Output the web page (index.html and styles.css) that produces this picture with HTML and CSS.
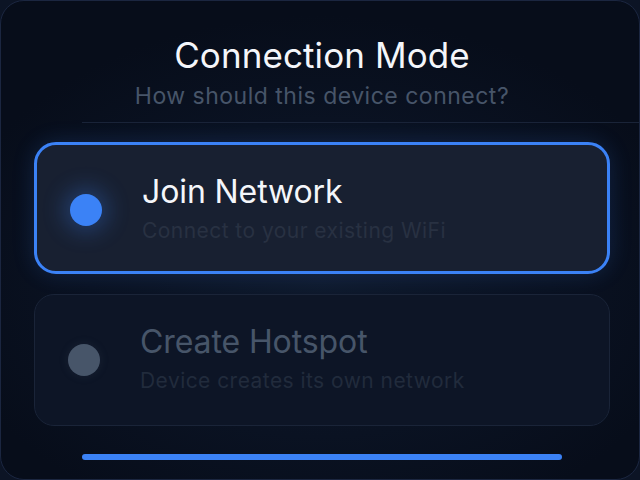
FILE: index.html
```html
<!DOCTYPE html>
<html lang="en">
<head>
    <meta charset="UTF-8">
    <meta name="viewport" content="width=device-width, initial-scale=1.0">
    <title>Connection Mode</title>
    <link rel="stylesheet" href="styles.css">
</head>
<body>

    <div class="panel">
        <!-- Header -->
        <div class="header">
            <h1 class="title">Connection Mode</h1>
            <p class="subtitle">How should this device connect?</p>
        </div>
        <div class="divider"></div>

        <!-- Options -->
        <div class="options">
            <div class="option selected">
                <span class="dot"></span>
                <div class="option-text">
                    <div class="option-title">Join Network</div>
                    <div class="option-desc">Connect to your existing WiFi</div>
                </div>
            </div>

            <div class="option">
                <span class="dot"></span>
                <div class="option-text">
                    <div class="option-title">Create Hotspot</div>
                    <div class="option-desc">Device creates its own network</div>
                </div>
            </div>
        </div>

        <div class="progress"></div>
    </div>

</body>
</html>
```

FILE: styles.css
```css
/* Global Styles */
body {
    margin: 0;
    padding: 0;
    background: #0c1425;
    font-family: 'Inter', 'Roboto', sans-serif;
}

.panel {
    width: 640px;
    height: 480px;
    box-sizing: border-box;
    border: 1px solid #1b2640;
    border-radius: 24px;
    background: radial-gradient(ellipse 60% 55% at 50% 58%, #0f1a2d 0%, #0a1222 60%, #070d1a 100%);
    padding: 34px 29px 0 33px;
    overflow: hidden;
}

/* Header */
.header {
    text-align: center;
}

.title {
    margin: 0;
    font-size: 35px;
    line-height: 40px;
    font-weight: 400;
    letter-spacing: 0.1px;
    color: #f4f6fa;
}

.subtitle {
    margin: 7px 0 0;
    font-size: 23px;
    line-height: 28px;
    letter-spacing: 0.5px;
    color: #475569;
}

.divider {
    height: 1px;
    background: #1a2438;
    margin: 12px -29px 0 48px;
}

/* Options */
.options {
    margin-top: 19px;
    display: flex;
    flex-direction: column;
    gap: 20px;
}

.option {
    height: 132px;
    box-sizing: border-box;
    display: flex;
    align-items: flex-start;
    gap: 40px;
    padding: 28px 0 0 33px;
    border: 1px solid #1a2438;
    border-radius: 20px;
    background: #0d1526;
}

.option.selected {
    border: 3px solid #3b82f6;
    border-radius: 22px;
    background: #182031;
    box-shadow: 0 0 22px rgba(59, 130, 246, 0.18);
}

.dot {
    flex: none;
    width: 32px;
    height: 32px;
    margin-top: 21px;
    border-radius: 50%;
    background: #475569;
    box-shadow: 0 0 10px rgba(71, 85, 105, 0.2);
}

.selected .dot {
    background: #3b82f6;
    box-shadow: 0 0 22px 6px rgba(59, 130, 246, 0.3);
}

.option-title {
    font-size: 32px;
    line-height: 38px;
    font-weight: 400;
    letter-spacing: -0.1px;
    color: #475569;
}

.selected .option-title {
    color: #f4f6fa;
}

.option-desc {
    margin-top: 8px;
    font-size: 21px;
    line-height: 24px;
    letter-spacing: 0.45px;
    color: #212b3c;
}

.selected .option-desc {
    color: #283142;
}

/* Bottom bar */
.progress {
    width: 480px;
    height: 6px;
    margin: 28px 0 0 48px;
    border-radius: 3px;
    background: #3b82f6;
}
```
